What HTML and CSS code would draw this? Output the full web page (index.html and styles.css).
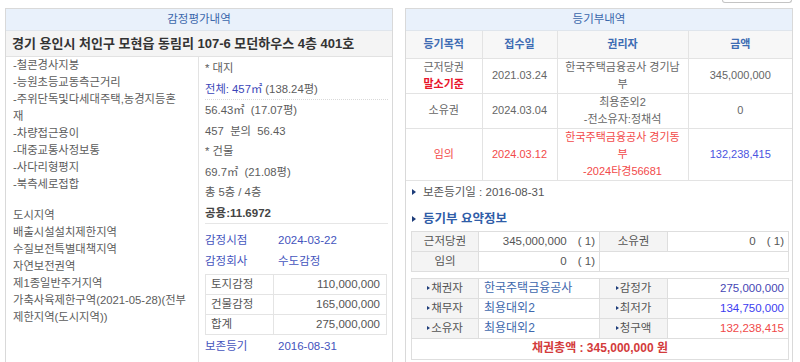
FILE: index.html
```html
<!DOCTYPE html>
<html lang="ko">
<head>
<meta charset="utf-8">
<title>감정평가 / 등기부내역</title>
<link rel="stylesheet" href="styles.css">
</head>
<body>
<div class="page">
  <div class="toolbar"><span class="tbtn"></span></div>
  <div class="panels">
    <section class="panel">
      <div class="ptitle">감정평가내역</div>
      <div class="addr">경기 용인시 처인구 모현읍 동림리 107-6 모던하우스 4층 401호</div>
      <div class="cols">
        <div class="col-a">
          <p class="lines">-철콘경사지붕<br>-능원초등교동측근거리<br>-주위단독및다세대주택,농경지등혼<br>재<br>-차량접근용이<br>-대중교통사정보통<br>-사다리형평지<br>-북측세로접합</p>
          <p class="lines zone">도시지역<br>배출시설설치제한지역<br>수질보전특별대책지역<br>자연보전권역<br>제1종일반주거지역<br>가축사육제한구역(2021-05-28)(전부<br>제한지역(도시지역))</p>
        </div>
        <div class="col-b">
          <div class="area">
            <div class="b-row">* 대지</div>
            <div class="b-row dotted"><span class="blue">전체: 457㎡</span> (138.24평)</div>
            <div class="b-row">56.43㎡ &nbsp;(17.07평)</div>
            <div class="b-row">457 &nbsp;분의 &nbsp;56.43</div>
            <div class="b-row">* 건물</div>
            <div class="b-row">69.7㎡ &nbsp;(21.08평)</div>
            <div class="b-row">총 5층 / 4층</div>
            <div class="b-row strong">공용:11.6972</div>
          </div>
          <div class="appr">
            <div class="kv"><span class="k">감정시점</span><span class="v">2024-03-22</span></div>
            <div class="kv"><span class="k">감정회사</span><span class="v">수도감정</span></div>
            <table class="amt">
              <tr><td class="al">토지감정</td><td class="ar">110,000,000</td></tr>
              <tr><td class="al">건물감정</td><td class="ar">165,000,000</td></tr>
              <tr><td class="al">합계</td><td class="ar">275,000,000</td></tr>
            </table>
            <div class="kv"><span class="k">보존등기</span><span class="v">2016-08-31</span></div>
          </div>
        </div>
      </div>
    </section>

    <section class="panel">
      <div class="ptitle">등기부내역</div>
      <table class="reg">
        <colgroup><col class="c1"><col class="c2"><col class="c3"><col class="c4"></colgroup>
        <tr class="head"><th>등기목적</th><th>접수일</th><th>권리자</th><th>금액</th></tr>
        <tr><td>근저당권<br><b class="base">말소기준</b></td><td>2021.03.24</td><td>한국주택금융공사 경기남<br>부</td><td>345,000,000</td></tr>
        <tr><td>소유권</td><td>2024.03.04</td><td>최용준외2<br>-전소유자:정채석</td><td>0</td></tr>
        <tr class="red"><td>임의</td><td>2024.03.12</td><td>한국주택금융공사 경기동<br>부<br>-2024타경56681</td><td class="amtblue">132,238,415</td></tr>
      </table>
      <div class="note"><span class="tri"></span>보존등기일 : 2016-08-31</div>
      <div class="subhead"><span class="tri"></span>등기부 요약정보</div>
      <table class="sum">
        <colgroup><col class="s1"><col class="s2"><col class="s3"><col class="s4"></colgroup>
        <tr><th>근저당권</th><td class="num">345,000,000<span class="cnt">( 1)</span></td><th>소유권</th><td class="num">0<span class="cnt">( 1)</span></td></tr>
        <tr><th>임의</th><td class="num">0<span class="cnt">( 1)</span></td><td colspan="2"></td></tr>
      </table>
      <table class="sum info">
        <colgroup><col class="s1"><col class="s2"><col class="s3"><col class="s4"></colgroup>
        <tr><th><span class="tri sm"></span>채권자</th><td class="name">한국주택금융공사</td><th><span class="tri sm"></span>감정가</th><td class="num v-appr">275,000,000</td></tr>
        <tr><th><span class="tri sm"></span>채무자</th><td class="name">최용대외2</td><th><span class="tri sm"></span>최저가</th><td class="num v-min">134,750,000</td></tr>
        <tr><th><span class="tri sm"></span>소유자</th><td class="name">최용대외2</td><th><span class="tri sm"></span>청구액</th><td class="num v-claim">132,238,415</td></tr>
        <tr><td colspan="4" class="total">채권총액 : 345,000,000 원</td></tr>
      </table>
    </section>
  </div>
</div>
</body>
</html>
```

FILE: styles.css
```css
* { box-sizing: border-box; }
html, body { margin: 0; padding: 0; background: #fff; }
body {
  font-family: "Liberation Sans", "Noto Sans CJK KR", sans-serif;
  font-size: 11px;
  color: #5c5c5c;
  overflow: hidden;
}
.page { padding: 0 8px 0 5px; }
.toolbar { height: 8px; display: flex; justify-content: flex-end; align-items: flex-start; }
.tbtn {
  width: 70px; height: 3px;
  border: 1px solid #c4c4c4; border-top: none;
  border-radius: 0 0 3px 3px;
}
.panels { display: flex; gap: 12px; align-items: flex-start; }
.panel {
  width: 388px;
  min-height: 380px;
  border: 1px solid #d9d9d9;
  display: flex;
  flex-direction: column;
}
.ptitle {
  height: 22px;
  line-height: 21px;
  background: #e9f1fb;
  border-bottom: 1px solid #dfe5ec;
  color: #3a67ab;
  text-align: center;
  font-size: 11.5px;
}
.addr {
  height: 26px;
  line-height: 25px;
  background: #f4f4f4;
  border-bottom: 1px solid #e2e2e2;
  padding-left: 6px;
  font-size: 13px;
  font-weight: bold;
  color: #333;
  white-space: nowrap;
}
.cols { display: flex; flex: 1; }
.col-a {
  width: 193px;
  padding: 0 4px 0 7px;
  border-right: 1px solid #e3e3e3;
  white-space: nowrap;
  overflow: hidden;
  font-size: 11.3px;
}
.lines { margin: 0; line-height: 17px; }
.zone { margin-top: 14px; }
.col-b { width: 193px; padding: 1px 4px 0 6px; font-size: 11.3px; }
.b-row { line-height: 20.5px; white-space: nowrap; }
.dotted { border-bottom: 1px dotted #d9d9d9; }
.blue { color: #3a45b8; }
.strong { font-weight: bold; color: #444; border-bottom: 1px solid #e6e6e6; font-size: 11.5px; }
.appr { padding-top: 6px; }
.kv { display: flex; line-height: 21px; color: #4454bd; font-size: 11.5px; }
.kv .k { width: 73px; }
.amt {
  width: 182px;
  border-collapse: collapse;
  margin: 2px 0 1px;
  font-size: 11.5px;
}
.amt td { border: 1px solid #e4e4e4; height: 20px; padding: 0; line-height: 19px; color: #555; }
.amt .al { width: 68px; padding-left: 5px; }
.amt .ar { text-align: right; padding-right: 6px; }

.reg { width: 100%; border-collapse: collapse; table-layout: fixed; }
.reg .c1 { width: 76px; } .reg .c2 { width: 75px; } .reg .c3 { width: 131px; } .reg .c4 { width: 104px; }
.reg th, .reg td {
  border: 1px solid #e3e3e3;
  text-align: center;
  vertical-align: middle;
  line-height: 17px;
  padding: 0 1px;
  font-weight: normal;
}
.reg tr > :first-child { border-left: none; }
.reg tr > :last-child { border-right: none; }
.reg .head th {
  height: 27px;
  background: #f7f7f7;
  color: #3e6cb3;
  font-weight: bold;
  border-top: none;
}
.reg td { color: #666; }
.base { color: #e8142a; }
.reg .red td { color: #f24a4a; }
.reg .red td.amtblue { color: #4b55e0; }

.tri {
  display: inline-block;
  width: 0; height: 0;
  border-left: 4px solid #1e3d7a;
  border-top: 3px solid transparent;
  border-bottom: 3px solid transparent;
  margin: 0 7px 1px 0;
  vertical-align: middle;
}
.tri.sm { border-left-width: 3px; border-top-width: 2.5px; border-bottom-width: 2.5px; margin: 0 1px 1px 0; }
.note { padding: 3px 0 3px 6px; line-height: 17px; color: #555; font-size: 11.5px; }
.subhead { padding: 7px 0 3px 6px; line-height: 17px; font-size: 12.5px; font-weight: bold; color: #2f5da8; }

.sum {
  width: 377px;
  margin: 0 4px 0 5px;
  border-collapse: collapse;
  table-layout: fixed;
  font-size: 11.5px;
}
.sum .s1 { width: 67px; } .sum .s2 { width: 121px; } .sum .s3 { width: 68px; } .sum .s4 { width: 121px; }
.sum th, .sum td {
  border: 1px solid #dedede;
  height: 20px;
  line-height: 19px;
  padding: 0;
  font-weight: normal;
  color: #555;
}
.sum th { background: #f4f4f4; text-align: center; }
.sum .num { text-align: right; padding-right: 4px; }
.cnt { margin-left: 11px; }
.info { margin-top: 6px; }
.info .name { padding-left: 5px; color: #3e68ad; font-size: 12px; }
.info .v-appr { color: #4646b4; }
.info .v-min { color: #3c3cf0; }
.info .v-claim { color: #f04848; }
.info .total {
  text-align: center;
  color: #d33b3b;
  font-weight: bold;
  font-size: 12px;
  height: 21px;
}
```
